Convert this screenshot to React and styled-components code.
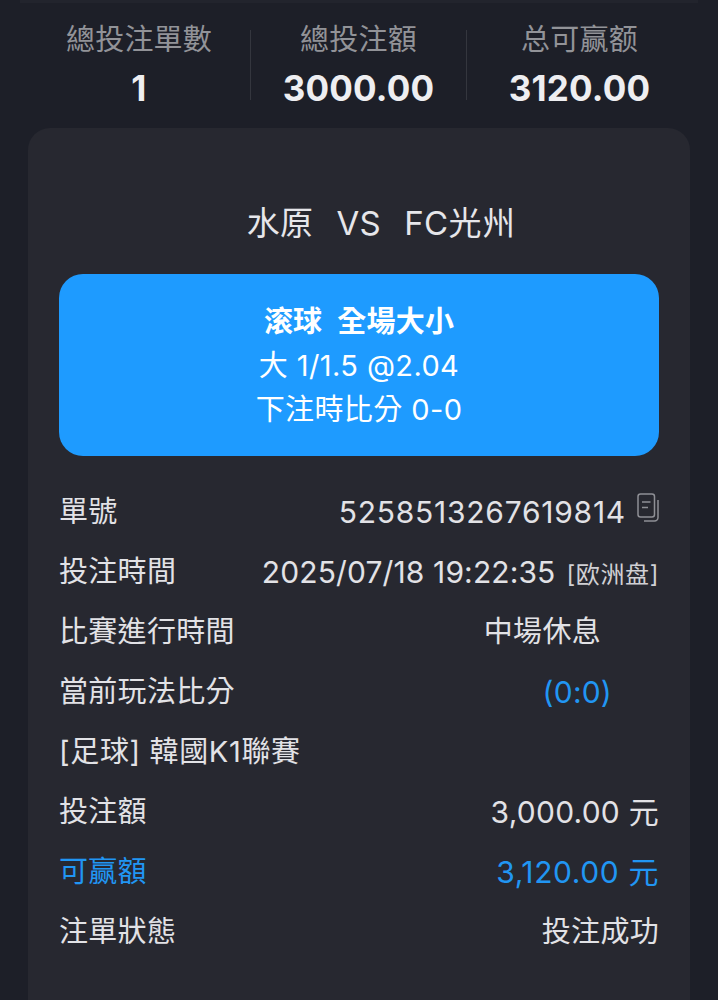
import React from "react";
import styled, { createGlobalStyle } from "styled-components";

const FONT = `Inter, "Noto Sans CJK TC", "Noto Sans CJK SC", sans-serif`;

const GlobalStyle = createGlobalStyle`
  html, body {
    margin: 0;
    padding: 0;
    background: #1d1f28;
    font-family: ${FONT};
  }
`;

const rows = [
  { label: "投注時間", value: "2025/07/18 19:22:35", tag: "[欧洲盘]", track: 0.12, num: true },
  { label: "比賽進行時間", value: "中場休息", inset: 58 },
  { label: "當前玩法比分", value: "(0:0)", valueBlue: true, inset: 47, track: 0.2, num: true },
  { label: "[足球] 韓國K1聯賽", labelTrack: 0.65 },
  { label: "投注額", value: "3,000.00 元", track: 0.25, num: true },
  { label: "可赢額", value: "3,120.00 元", labelBlue: true, valueBlue: true, track: 0.6, num: true },
  { label: "注單狀態", value: "投注成功" },
];

export default function App() {
  return (
    <Page>
      <GlobalStyle />
      <TopEdge />
      <Stats>
        <Stat>
          <StatLabel>總投注單數</StatLabel>
          <StatValue>1</StatValue>
        </Stat>
        <Stat $divided>
          <StatLabel>總投注額</StatLabel>
          <StatValue>3000.00</StatValue>
        </Stat>
        <Stat $divided>
          <StatLabel>总可赢额</StatLabel>
          <StatValue>3120.00</StatValue>
        </Stat>
      </Stats>
      <Card>
        <Match>
          <span>水原</span>
          <span>VS</span>
          <span>FC光州</span>
        </Match>
        <Banner>
          <BannerTitle>滚球&nbsp;&nbsp;全場大小</BannerTitle>
          <BannerLine>大 1/1.5 @2.04</BannerLine>
          <BannerLine>下注時比分 0-0</BannerLine>
        </Banner>
        <Rows>
          <Row>
            <RowText>單號</RowText>
            <RowValue>
              <RowText $num $track={0.75}>5258513267619814</RowText>
              <CopyIcon viewBox="0 0 22 29" fill="none" stroke="currentColor" strokeWidth="1.5">
                <rect x="1" y="1" width="16.5" height="23" rx="2.5" />
                <path d="M5 9h8.5M5 14.5h6" />
                <path d="M21 7v17.5a3.5 3.5 0 0 1-3.5 3.5H7" />
              </CopyIcon>
            </RowValue>
          </Row>
          {rows.map((row) => (
            <Row key={row.label}>
              <RowText $blue={row.labelBlue} $track={row.labelTrack}>
                {row.label}
              </RowText>
              {row.value && (
                <RowValue $inset={row.inset}>
                  <RowText $blue={row.valueBlue} $track={row.track} $num={row.num}>
                    {row.value}
                  </RowText>
                  {row.tag && <Tag>{row.tag}</Tag>}
                </RowValue>
              )}
            </Row>
          ))}
        </Rows>
      </Card>
    </Page>
  );
}

const Page = styled.div`
  width: 718px;
  height: 1000px;
  overflow: hidden;
  background: #1d1f28;
  color: #e2e2e6;
`;

const TopEdge = styled.div`
  height: 3px;
  margin: 0 20px;
  background: #22242d;
`;

const Stats = styled.div`
  display: grid;
  grid-template-columns: 222px 216px 226px;
  margin: 0 28px;
  padding-top: 17px;
  height: 108px;
  box-sizing: border-box;
`;

const Stat = styled.div`
  display: flex;
  flex-direction: column;
  align-items: center;
  height: 70px;
  margin-top: 10px;
  border-left: ${(p) => (p.$divided ? "1px solid #34363e" : "none")};
`;

const StatLabel = styled.div`
  margin-top: -10px;
  font-size: 29px;
  line-height: 40px;
  letter-spacing: 0.2px;
  color: #929398;
`;

const StatValue = styled.div`
  margin-top: 7px;
  font-size: 35px;
  line-height: 42px;
  font-weight: 700;
  letter-spacing: 0.2px;
  color: #eeeef1;
`;

const Card = styled.div`
  margin: 17px 28px 0;
  height: 900px;
  padding: 0 31px;
  border-radius: 22px;
  background: #272830;
`;

const Match = styled.div`
  display: flex;
  justify-content: center;
  gap: 23px;
  padding-top: 74px;
  padding-left: 44px;
  font-size: 33px;
  line-height: 42px;
  letter-spacing: 0.4px;
  color: #e6e6ea;
`;

const Banner = styled.div`
  display: flex;
  flex-direction: column;
  align-items: center;
  height: 182px;
  margin-top: 30px;
  padding-top: 26px;
  box-sizing: border-box;
  border-radius: 24px;
  background: #1e9bff;
  color: #fff;
`;

const BannerTitle = styled.div`
  font-size: 29px;
  line-height: 44px;
  font-weight: 600;
  letter-spacing: 0.2px;
`;

const BannerLine = styled.div`
  font-size: 29px;
  line-height: 44px;
  letter-spacing: 0.4px;
`;

const Rows = styled.div`
  display: flex;
  flex-direction: column;
  margin-top: 26px;
`;

const Row = styled.div`
  display: flex;
  align-items: center;
  justify-content: space-between;
  height: 60px;
`;

const RowText = styled.span`
  font-size: ${(p) => (p.$num ? 30 : 29)}px;
  line-height: 40px;
  white-space: nowrap;
  letter-spacing: ${(p) => p.$track ?? 0.3}px;
  color: ${(p) => (p.$blue ? "#2196f3" : "#e2e2e6")};
`;

const RowValue = styled.div`
  display: flex;
  align-items: center;
  gap: 11px;
  padding-right: ${(p) => p.$inset || 0}px;
`;

const Tag = styled.span`
  font-size: 24px;
  letter-spacing: 0.6px;
  color: #d0d0d4;
`;

const CopyIcon = styled.svg`
  width: 22px;
  height: 29px;
  margin-top: -10px;
  color: #8e8f95;
`;
